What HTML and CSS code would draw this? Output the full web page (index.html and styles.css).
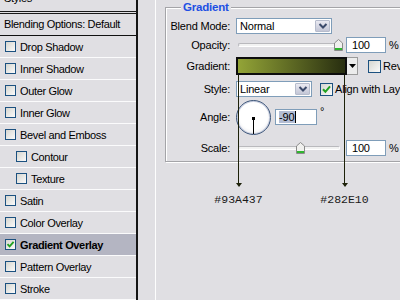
FILE: index.html
```html
<!DOCTYPE html>
<html>
<head>
<meta charset="utf-8">
<link rel="stylesheet" href="styles.css">
</head>
<body>
<div class="page">
  <aside class="side">
    <div class="styles-row"><span>Styles</span></div>
    <div class="blend-row">Blending Options: Default</div>
    <div class="item"><span class="cb"></span>Drop Shadow</div>
    <div class="item"><span class="cb"></span>Inner Shadow</div>
    <div class="item"><span class="cb"></span>Outer Glow</div>
    <div class="item"><span class="cb"></span>Inner Glow</div>
    <div class="item"><span class="cb"></span>Bevel and Emboss</div>
    <div class="item sub"><span class="cb"></span>Contour</div>
    <div class="item sub"><span class="cb"></span>Texture</div>
    <div class="item"><span class="cb"></span>Satin</div>
    <div class="item"><span class="cb"></span>Color Overlay</div>
    <div class="item selected"><span class="cb checked"><svg width="9" height="9" viewBox="0 0 9 9"><path d="M1.5 4.2 L3.6 6.4 L7.6 1.8" fill="none" stroke="#21a121" stroke-width="1.8"/></svg></span>Gradient Overlay</div>
    <div class="item"><span class="cb"></span>Pattern Overlay</div>
    <div class="item"><span class="cb"></span>Stroke</div>
  </aside>
  <div class="gutter"></div>
  <main class="main">
    <section class="group">
      <div class="legend"><span>Gradient</span></div>
      <div class="row r1">
        <label class="lbl">Blend Mode:</label>
        <div class="sel w96"><span class="val">Normal</span><span class="btn"><svg width="10" height="8" viewBox="0 0 10 8"><path d="M1.5 2 L5 5.5 L8.5 2" fill="none" stroke="#3b4a6b" stroke-width="2"/></svg></span></div>
      </div>
      <div class="row r2">
        <label class="lbl">Opacity:</label>
        <div class="slider"><div class="track"></div><svg class="thumb" style="left:96px" width="9" height="12" viewBox="0 0 9 12"><path d="M4.5 0.5 L8.5 4 L8.5 11.5 L0.5 11.5 L0.5 4 Z" fill="#f0f0ee" stroke="#8a8a8a"/><rect x="1" y="9" width="7" height="2" fill="#2fb52f"/></svg></div>
        <div class="num">100</div><span class="unit">%</span>
      </div>
      <div class="row r3">
        <label class="lbl">Gradient:</label>
        <div class="grad"><div class="swatch"></div><span class="gbtn"><svg width="7" height="4" viewBox="0 0 7 4"><path d="M0 0 H7 L3.5 4 Z" fill="#000"/></svg></span></div>
        <span class="cb big rev"></span><span class="ctext">Reverse</span>
      </div>
      <div class="row r4">
        <label class="lbl">Style:</label>
        <div class="sel w76"><span class="val">Linear</span><span class="btn"><svg width="10" height="8" viewBox="0 0 10 8"><path d="M1.5 2 L5 5.5 L8.5 2" fill="none" stroke="#3b4a6b" stroke-width="2"/></svg></span></div>
        <span class="cb big checked align"><svg width="11" height="11" viewBox="0 0 11 11"><path d="M2 5.2 L4.4 7.8 L9 2.4" fill="none" stroke="#21a121" stroke-width="2"/></svg></span><span class="ctext">Align with Layer</span>
      </div>
      <div class="row r5">
        <label class="lbl">Angle:</label>
        <div class="dial"><span class="hand"></span><span class="dot"></span></div>
        <div class="num angle"><span class="hl">-90</span><span class="caret"></span></div><span class="deg">°</span>
      </div>
      <div class="row r6">
        <label class="lbl">Scale:</label>
        <div class="slider s2"><div class="track"></div><svg class="thumb" style="left:58px" width="9" height="12" viewBox="0 0 9 12"><path d="M4.5 0.5 L8.5 4 L8.5 11.5 L0.5 11.5 L0.5 4 Z" fill="#f0f0ee" stroke="#8a8a8a"/><rect x="1" y="9" width="7" height="2" fill="#2fb52f"/></svg></div>
        <div class="num">100</div><span class="unit">%</span>
      </div>
    </section>
  </main>
  <div class="annot a1"><span class="vline"></span><span class="arrow"></span><span class="code">#93A437</span></div>
  <div class="annot a2"><span class="vline"></span><span class="arrow"></span><span class="code">#282E10</span></div>
</div>
</body>
</html>
```

FILE: styles.css
```css
html, body {
  margin: 0;
  padding: 0;
  background: #e0dfe3;
}
body {
  width: 400px;
  height: 300px;
  overflow: hidden;
  font-family: "Liberation Sans", Arial, sans-serif;
  font-size: 11px;
  color: #000;
  letter-spacing: -0.2px;
}
.page {
  position: relative;
  display: flex;
  width: 400px;
  height: 300px;
  overflow: hidden;
}
.side {
  width: 136px;
  flex: none;
  border-right: 2px solid #151515;
  display: flex;
  flex-direction: column;
  letter-spacing: -0.35px;
}
.styles-row {
  height: 11px;
  overflow: hidden;
  border-bottom: 3px double #1a1a1a;
  padding-left: 4px;
}
.styles-row span {
  display: block;
  margin-top: -9px;
  line-height: 14px;
}
.blend-row {
  height: 21px;
  line-height: 20px;
  padding-left: 4px;
  border-bottom: 1px solid #111;
  white-space: nowrap;
}
.item {
  height: 21px;
  border-bottom: 1px solid #fbfbfc;
  display: flex;
  align-items: center;
  padding-left: 5px;
  white-space: nowrap;
}
.item.sub {
  padding-left: 16px;
}
.item.selected {
  background: #b4b5c2;
  font-weight: bold;
}
.cb {
  width: 9px;
  height: 9px;
  border: 1px solid #1c5180;
  background: linear-gradient(135deg, #d6d6d0, #fafafa);
  margin-right: 4px;
  flex: none;
  display: flex;
  align-items: center;
  justify-content: center;
}
.cb.big {
  width: 11px;
  height: 11px;
}
.gutter {
  width: 17px;
  flex: none;
  border-right: 1px solid #fdfdfd;
}
.main {
  flex: 1;
  overflow: hidden;
  padding-top: 7px;
}
.group {
  margin-left: 9px;
  width: 300px;
  border: 1px solid #a4a4a8;
  box-shadow: inset 1px 1px 0 #fff, 1px 1px 0 #fff;
  padding-bottom: 5px;
}
.legend {
  height: 14px;
  margin-top: -8px;
  line-height: 14px;
}
.legend span {
  margin-left: 15px;
  padding: 0 2px;
  background: #e0dfe3;
  color: #1d4fe3;
  font-weight: bold;
  font-size: 11.5px;
}
.row {
  display: flex;
  align-items: center;
  height: 16px;
  white-space: nowrap;
}
.r1 { margin-top: 4px; }
.r2 { margin-top: 3px; }
.r3 { margin-top: 4px; height: 18px; }
.r4 { margin-top: 6px; }
.r5 { margin-top: 2px; height: 36px; }
.r6 { margin-top: 5px; }
.lbl {
  width: 64px;
  text-align: right;
  margin-right: 6px;
  flex: none;
}
.sel {
  height: 14px;
  border: 1px solid #7f9db9;
  background: #fff;
  display: flex;
  align-items: center;
  justify-content: space-between;
  flex: none;
}
.w96 { width: 94px; }
.w76 { width: 74px; }
.val { padding-left: 3px; }
.btn {
  width: 15px;
  height: 12px;
  margin-right: 1px;
  border: 1px solid #b6bccc;
  border-radius: 1px;
  background: linear-gradient(#eaeaf2, #c3c6d6);
  display: flex;
  align-items: center;
  justify-content: center;
  box-sizing: border-box;
}
.slider {
  position: relative;
  width: 104px;
  height: 16px;
  display: flex;
  align-items: center;
  margin-left: 2px;
  flex: none;
}
.slider.s2 { width: 102px; }
.track {
  width: 100%;
  height: 2px;
  border: 1px solid #b9b9bd;
  border-bottom-color: #fff;
  border-right-color: #fff;
  background: #f2f2f2;
  border-radius: 2px;
}
.thumb {
  position: absolute;
  top: 2px;
}
.num {
  width: 33px;
  height: 14px;
  border: 1px solid #7f9db9;
  background: #fff;
  padding-left: 5px;
  line-height: 14px;
  margin-left: 4px;
  flex: none;
}
.slider.s2 + .num { margin-left: 6px; }
.unit { margin-left: 3px; }
.grad {
  display: flex;
  height: 18px;
  flex: none;
}
.swatch {
  width: 107px;
  height: 14px;
  border: 2px solid #0d0d0d;
  background: linear-gradient(90deg, #93a437, #282e10);
}
.gbtn {
  width: 10px;
  height: 16px;
  border: 1px solid #9b9b9b;
  border-left: none;
  background: #ececec;
  display: flex;
  align-items: center;
  justify-content: center;
}
.rev { margin-left: 10px; margin-right: 2px; }
.align { margin-left: 8px; margin-right: 2px; }
.dial {
  position: relative;
  width: 33px;
  height: 33px;
  border: 1px solid #3b5479;
  border-radius: 50%;
  background: radial-gradient(circle at 50% 45%, #ffffff 55%, #dcdce0 100%);
  box-shadow: inset 0 0 0 1px #c9cfe0;
  flex: none;
}
.hand {
  position: absolute;
  left: 16px;
  top: 17px;
  width: 1px;
  height: 16px;
  background: #000;
}
.dot {
  position: absolute;
  left: 15px;
  top: 16px;
  width: 3px;
  height: 3px;
  background: #000;
}
.num.angle {
  width: 37px;
  margin-left: 4px;
  padding-left: 3px;
  display: flex;
  align-items: center;
}
.hl {
  background: #b3bdd4;
  line-height: 12px;
  padding-right: 1px;
}
.caret {
  width: 1px;
  height: 12px;
  background: #000;
}
.deg {
  margin-left: 3px;
  align-self: flex-start;
  margin-top: 6px;
}
.annot {
  position: absolute;
  top: 75px;
  width: 61px;
  display: flex;
  flex-direction: column;
  align-items: center;
}
.a1 { left: 208px; }
.a2 { left: 314px; }
.vline {
  width: 1px;
  height: 108px;
  background: #1d2109;
}
.arrow {
  width: 0;
  height: 0;
  border-left: 3px solid transparent;
  border-right: 3px solid transparent;
  border-top: 4px solid #1d2109;
}
.code {
  margin-top: 6px;
  font-family: "Liberation Mono", "Courier New", monospace;
  font-size: 11.5px;
  line-height: 14px;
  letter-spacing: 0;
  color: #1a1a1a;
}
```
